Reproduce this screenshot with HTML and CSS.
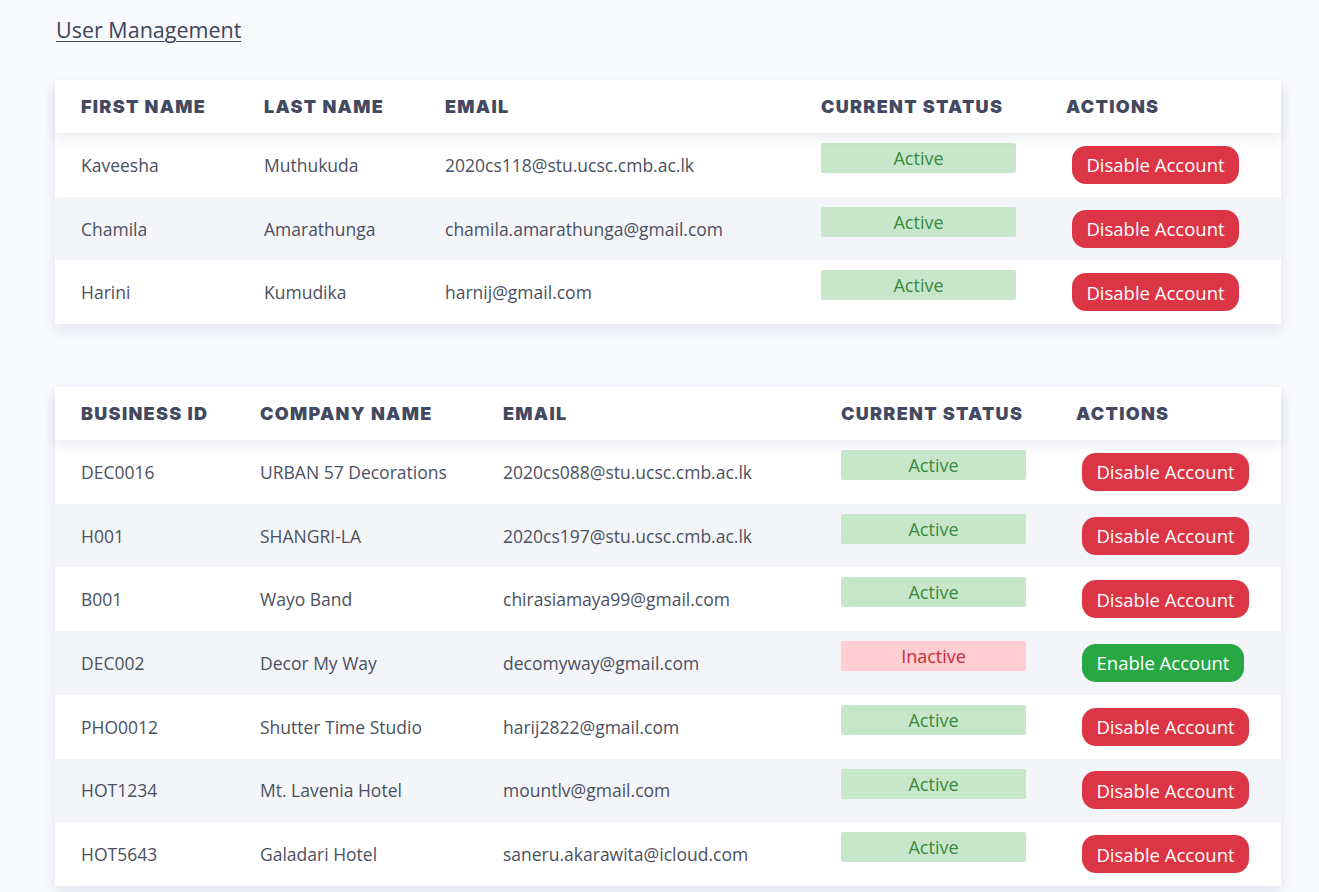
FILE: index.html
```html
<!DOCTYPE html>
<html lang="en">
<head>
<meta charset="utf-8">
<title>User Management</title>
<link rel="stylesheet" href="styles.css">
</head>
<body>
<main class="page">
  <h1 class="title">User Management</h1>

  <section class="table users">
    <div class="row head">
      <div class="cell">FIRST NAME</div>
      <div class="cell">LAST NAME</div>
      <div class="cell">EMAIL</div>
      <div class="cell">CURRENT STATUS</div>
      <div class="cell">ACTIONS</div>
    </div>
    <div class="row">
      <div class="cell">Kaveesha</div>
      <div class="cell">Muthukuda</div>
      <div class="cell">2020cs118@stu.ucsc.cmb.ac.lk</div>
      <div class="cell status"><span class="badge active">Active</span></div>
      <div class="cell"><button class="btn disable">Disable Account</button></div>
    </div>
    <div class="row">
      <div class="cell">Chamila</div>
      <div class="cell">Amarathunga</div>
      <div class="cell">chamila.amarathunga@gmail.com</div>
      <div class="cell status"><span class="badge active">Active</span></div>
      <div class="cell"><button class="btn disable">Disable Account</button></div>
    </div>
    <div class="row">
      <div class="cell">Harini</div>
      <div class="cell">Kumudika</div>
      <div class="cell">harnij@gmail.com</div>
      <div class="cell status"><span class="badge active">Active</span></div>
      <div class="cell"><button class="btn disable">Disable Account</button></div>
    </div>
  </section>

  <section class="table business">
    <div class="row head">
      <div class="cell">BUSINESS ID</div>
      <div class="cell">COMPANY NAME</div>
      <div class="cell">EMAIL</div>
      <div class="cell">CURRENT STATUS</div>
      <div class="cell">ACTIONS</div>
    </div>
    <div class="row">
      <div class="cell">DEC0016</div>
      <div class="cell">URBAN 57 Decorations</div>
      <div class="cell">2020cs088@stu.ucsc.cmb.ac.lk</div>
      <div class="cell status"><span class="badge active">Active</span></div>
      <div class="cell"><button class="btn disable">Disable Account</button></div>
    </div>
    <div class="row">
      <div class="cell">H001</div>
      <div class="cell">SHANGRI-LA</div>
      <div class="cell">2020cs197@stu.ucsc.cmb.ac.lk</div>
      <div class="cell status"><span class="badge active">Active</span></div>
      <div class="cell"><button class="btn disable">Disable Account</button></div>
    </div>
    <div class="row">
      <div class="cell">B001</div>
      <div class="cell">Wayo Band</div>
      <div class="cell">chirasiamaya99@gmail.com</div>
      <div class="cell status"><span class="badge active">Active</span></div>
      <div class="cell"><button class="btn disable">Disable Account</button></div>
    </div>
    <div class="row">
      <div class="cell">DEC002</div>
      <div class="cell">Decor My Way</div>
      <div class="cell">decomyway@gmail.com</div>
      <div class="cell status"><span class="badge inactive">Inactive</span></div>
      <div class="cell"><button class="btn enable">Enable Account</button></div>
    </div>
    <div class="row">
      <div class="cell">PHO0012</div>
      <div class="cell">Shutter Time Studio</div>
      <div class="cell">harij2822@gmail.com</div>
      <div class="cell status"><span class="badge active">Active</span></div>
      <div class="cell"><button class="btn disable">Disable Account</button></div>
    </div>
    <div class="row">
      <div class="cell">HOT1234</div>
      <div class="cell">Mt. Lavenia Hotel</div>
      <div class="cell">mountlv@gmail.com</div>
      <div class="cell status"><span class="badge active">Active</span></div>
      <div class="cell"><button class="btn disable">Disable Account</button></div>
    </div>
    <div class="row">
      <div class="cell">HOT5643</div>
      <div class="cell">Galadari Hotel</div>
      <div class="cell">saneru.akarawita@icloud.com</div>
      <div class="cell status"><span class="badge active">Active</span></div>
      <div class="cell"><button class="btn disable">Disable Account</button></div>
    </div>
  </section>
</main>
</body>
</html>
```

FILE: styles.css
```css
* { box-sizing: border-box; }

html, body {
  margin: 0;
  padding: 0;
  background: #f8f9fd;
}

body {
  font-family: "Open Sans", "Noto Sans", sans-serif;
  color: #4b505f;
  overflow: hidden;
}

.page {
  padding: 15px 38px 0 55px;
}

.title {
  margin: 0 0 35px 1px;
  font-size: 21.5px;
  font-weight: 400;
  line-height: 30px;
  color: #3f4558;
  text-decoration: underline;
  text-underline-offset: 3px;
  text-decoration-thickness: 1px;
}

.table {
  width: 1226px;
  background: #fff;
  box-shadow: 0 6px 12px rgba(60, 70, 110, 0.10);
  margin-bottom: 63px;
}

.users .row { grid-template-columns: 183px 181px 376px 245px 241px; }
.business .row { grid-template-columns: 179px 243px 338px 235px 231px; }

.row {
  display: grid;
  height: 63.7px;
  align-items: center;
  font-size: 17.5px;
}

.row:nth-child(odd) { background: #f4f5f9; }
.row:nth-child(even) { background: #fff; }

.row.head {
  position: relative;
  z-index: 1;
  height: 53px;
  background: #fff;
  box-shadow: 0 6px 10px rgba(60, 70, 110, 0.09);
  font-family: "Inter", sans-serif;
  font-weight: 900;
  font-size: 18px;
  letter-spacing: 1.3px;
  color: #434960;
}

.cell {
  padding: 0 0 0 26px;
  white-space: nowrap;
}

.cell.status {
  align-self: start;
  padding-top: 10px;
}

.badge {
  display: block;
  width: 195px;
  height: 30px;
  line-height: 30px;
  text-align: center;
  border-radius: 2px;
  font-size: 18px;
}

.business .badge { width: 185px; }

.badge.active {
  background: #c8e6c9;
  color: #3a8a3f;
}

.badge.inactive {
  background: #ffcdd2;
  color: #c0303a;
}

.btn {
  margin-left: 6px;
  height: 38px;
  padding: 0;
  border: 0;
  border-radius: 14px;
  font-family: "Open Sans", "Noto Sans", sans-serif;
  font-size: 18.5px;
  color: #fff;
  cursor: pointer;
}

.btn.disable {
  width: 167px;
  background: #dc3545;
}

.btn.enable {
  width: 162px;
  background: #28a745;
}
```
